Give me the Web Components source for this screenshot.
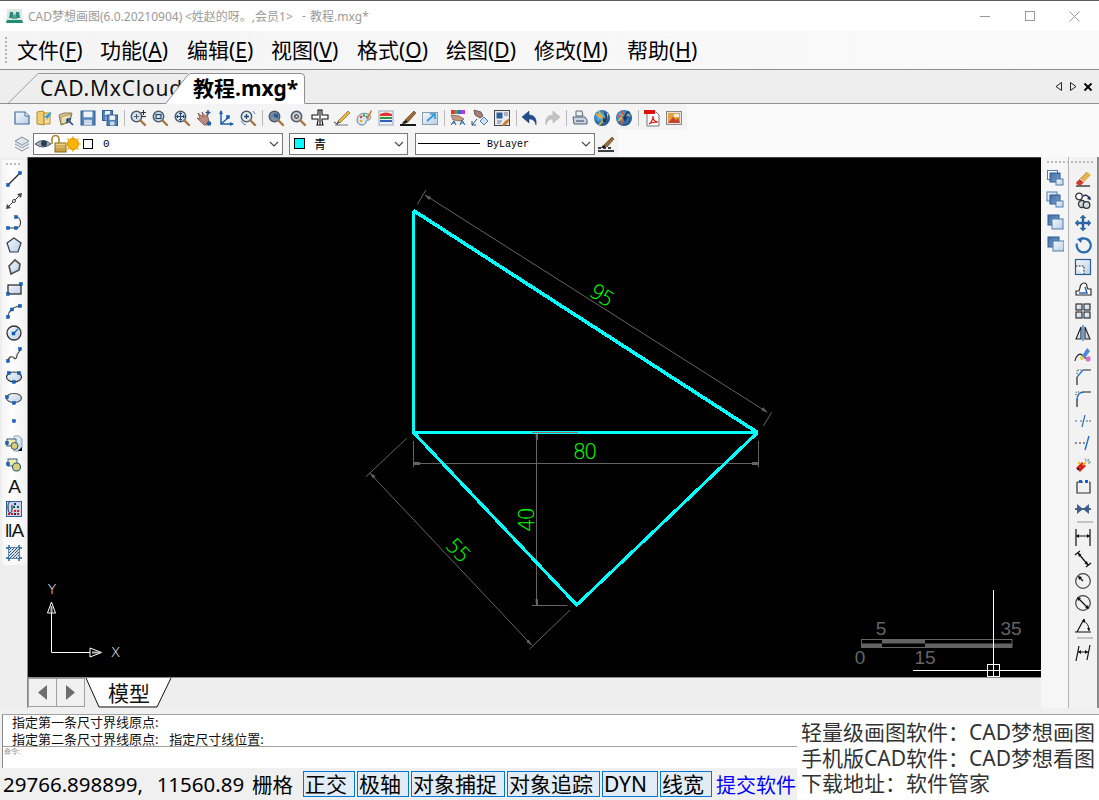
<!DOCTYPE html>
<html lang="zh">
<head>
<meta charset="utf-8">
<title>CAD梦想画图</title>
<style>
html, body { margin: 0; padding: 0; background: #f0f0f0; }
</style>
</head>
<body>
<cad-window>
    <cad-title></cad-title>
    <cad-menu>
        <cad-menu-item label="文件" key="F" width="83"></cad-menu-item>
        <cad-menu-item label="功能" key="A" width="87"></cad-menu-item>
        <cad-menu-item label="编辑" key="E" width="84"></cad-menu-item>
        <cad-menu-item label="视图" key="V" width="86"></cad-menu-item>
        <cad-menu-item label="格式" key="O" width="89"></cad-menu-item>
        <cad-menu-item label="绘图" key="D" width="88"></cad-menu-item>
        <cad-menu-item label="修改" key="M" width="93"></cad-menu-item>
        <cad-menu-item label="帮助" key="H" width="80"></cad-menu-item>
    </cad-menu>
    <cad-tabs></cad-tabs>
    <cad-toolbars></cad-toolbars>
    <cad-main></cad-main>
    <cad-command></cad-command>
    <cad-status></cad-status>
    <cad-promo></cad-promo>
</cad-window>

<script>
const CJK = '"Noto Sans", "Noto Sans CJK SC", sans-serif';

// small pieces the icons share
const N = (x, y) => `<rect x="${x - 1.5}" y="${y - 1.5}" width="3" height="3" fill="#0b66cc" stroke="#063f8c" stroke-width=".4"/>`;
const DEFS = `<defs>
    <linearGradient id="pale" x1="0" y1="0" x2="1" y2="1"><stop offset="0" stop-color="#f4f8fc"/><stop offset="1" stop-color="#b9cfe6"/></linearGradient>
    <linearGradient id="deep" x1="0" y1="0" x2="1" y2="1"><stop offset="0" stop-color="#3f6ea6"/><stop offset="1" stop-color="#7ea2ca"/></linearGradient>
    <linearGradient id="gold" x1="0" y1="0" x2="0" y2="1"><stop offset="0" stop-color="#f5dc8a"/><stop offset="1" stop-color="#c79a3c"/></linearGradient>
    <radialGradient id="ball" cx=".4" cy=".4" r=".7"><stop offset="0" stop-color="#8fd0ee"/><stop offset=".55" stop-color="#2f78b8"/><stop offset="1" stop-color="#20456f"/></radialGradient>
</defs>`;
const MAG = (inner, tint = '#d5e2ee') => `<circle cx="7.5" cy="7.5" r="5.2" fill="${tint}" stroke="#4d5c6c" stroke-width="1.5"/>
    <path d="M11.5 11.5l4.5 4.5" stroke="#a5763f" stroke-width="2.4" stroke-linecap="round"/>${inner}`;
const FLOPPY = (x, y, s) => `<rect x="${x}" y="${y}" width="${s}" height="${s}" fill="#4f81b5" stroke="#2f5f94"/>
    <rect x="${x + 2.5}" y="${y + .5}" width="${s - 5}" height="${s * .42}" fill="#eef3f8"/>
    <rect x="${x + 3}" y="${y + s * .62}" width="${s - 6}" height="${s * .38}" fill="#c8d8e8"/>`;
const STACK = (a) => `<rect x="${a[0]}" y="${a[1]}" width="11" height="10" fill="url(#deep)" stroke="#2d5c92"/>
    <rect x="${a[2]}" y="${a[3]}" width="11" height="10" fill="url(#pale)" stroke="#4f7cad"/>`;
const DIMBAR = (d) => `<path d="${d}" stroke="#111" stroke-width="1.2" fill="none"/>`;

const ICONS = {
    // top bar
    new: `<path d="M2 3h10l4 4v8H2z" fill="url(#pale)" stroke="#3f6c9e" stroke-width="1.2"/><path d="M12 3v4h4" fill="#fff" stroke="#3f6c9e"/>`,
    open: `<path d="M2 3l6-1 1 1v13l-7-1z" fill="#f0cf72" stroke="#b28a2f"/><path d="M9 4h6v11H9z" fill="#f6e19c" stroke="#b28a2f"/><path d="M16 3l-7 5 3 1-1 3 5-7z" fill="#2f9be0"/>`,
    open2: `<path d="M2 6l5-2h8l-2 9-9 3z" fill="#d8c58f" stroke="#8a7a49"/><path d="M4 8l10-3-2 8-8 2z" fill="#e9dcb0" stroke="#8a7a49" stroke-width=".6"/><path d="M10 10l6 6M10 10v4M10 10h4" stroke="#1f4f8c" stroke-width="1.6" fill="none"/>`,
    save: `<g transform="translate(1.5 1.5)">${FLOPPY(.5, .5, 14)}</g>`,
    saveall: FLOPPY(1.5, 1.5, 10) + FLOPPY(6, 6, 10.5),
    zoomin: MAG('<path d="M5 7.5h5M7.5 5v5" stroke="#456" />') + '<path d="M12 3.5h5M14.5 1v5" stroke="#234" stroke-width="1.1"/><path d="M12 7.5h5" stroke="#234" stroke-width="1.1"/>',
    zoomwin: MAG('<rect x="5" y="5.5" width="5" height="4" fill="none" stroke="#24476e" stroke-width="1.2"/>'),
    zoommove: MAG('<path d="M7.5 3.5v8M3.5 7.5h8M7.5 3.5l-1.5 1.5M7.5 3.5l1.5 1.5M7.5 11.5l-1.5-1.5M7.5 11.5l1.5-1.5M3.5 7.5l1.5-1.5M3.5 7.5l1.5 1.5M11.5 7.5l-1.5-1.5M11.5 7.5l-1.5 1.5" stroke="#24476e" fill="none"/>'),
    hand: `<path d="M3 4l5 4-1-5 4 5 1-3 2 7-2 4H9L2 9l3 1z" fill="#bd8a80" stroke="#7a5850" stroke-width=".8"/><path d="M13 1v5M10.5 3.5h5" stroke="#244f8a" stroke-width="1.4"/><circle cx="14" cy="14.5" r="2.3" fill="#1c5fa8"/>`,
    axes: `<path d="M4 2v13h12M4 15l8-7" stroke="#1f5fa5" stroke-width="1.5" fill="none"/><path d="M4 1l-2 4h4zM17 15l-4-2v4z" fill="#1f5fa5"/>${N(11, 8)}`,
    zoomball: MAG('<path d="M5 7.5h5M7.5 5v5" stroke="#24476e" stroke-width="1.3"/>', '#e4ecf3') + '<path d="M2 12a8 8 0 0 0 5 4M14 2l2 3" stroke="#4f80b5" fill="none"/>',
    zoomprev: MAG('<path d="M4 8l4-4 2 2 1-3v6l-5-1 2-1-1-1z" fill="#1f5594"/>', '#7c92a8'),
    zoomext: MAG('<circle cx="7.5" cy="7.5" r="3" fill="#555" stroke="#eee"/><circle cx="7.5" cy="7.5" r="1" fill="#eee"/>', '#b8c2cc'),
    pan: `<path d="M7 1h4v5h6v4h-6v2l1 4H6l1-4v-2H1V6h6z" fill="#fff" stroke="#111" stroke-width="1.1"/><path d="M9 1v15" stroke="#111" stroke-width="1.1"/>`,
    pencil: `<path d="M2 16h13" stroke="#777"/><path d="M5 12L15 2l2 2L7 14z" fill="#e6b64a" stroke="#8a6a1f" stroke-width=".7"/><path d="M5 12l-2 3 4-1z" fill="#555"/><path d="M1 13c2 1 3 3 4 2" stroke="#222" fill="none"/>`,
    palette: `<path d="M2 11c0-6 7-8 11-6 4 2 3 5 1 6-2 0-3 0-3 2 0 2-2 3-4 3-3 0-5-2-5-5z" fill="#dbe7f1" stroke="#5c7fa3"/><circle cx="6" cy="8" r="1.3" fill="#e33"/><circle cx="9" cy="6.5" r="1.3" fill="#3a3"/><circle cx="12" cy="8" r="1.3" fill="#36c"/><circle cx="6" cy="12" r="1.3" fill="#fa0"/><path d="M11 9l5-8 1 1-4 9z" fill="#c98a3a"/>`,
    layers: `<rect x="2" y="2" width="14" height="14" fill="#eef2f6" stroke="#9aa7b4"/><path d="M3 5q6-3 12 0M3 5h12v2H3z" fill="#d33"/><path d="M3 8h12v2H3z" fill="#2a9a3e"/><path d="M3 11h12v2H3z" fill="#2f62c0"/>`,
    brushline: `<path d="M1 16h16" stroke="#000" stroke-width="1.8"/><path d="M6 11L15 2l2 2-8 9z" fill="#9a6a34" stroke="#5b3d1a" stroke-width=".6"/><path d="M3 15c1-3 3-4 4-4l2 2c-1 1-3 2-6 2z" fill="#222"/>`,
    arrowbox: `<rect x="1.5" y="3.5" width="15" height="12" fill="url(#pale)" stroke="#8b9cae"/><path d="M6 12l8-7M9 5h5v5" stroke="#2b9be0" stroke-width="1.7" fill="none"/>`,
    colorhand: `<rect x="2" y="1" width="14" height="4" fill="#e33"/><rect x="6" y="1" width="3" height="4" fill="#3b3"/><rect x="9" y="1" width="3" height="4" fill="#36d"/><rect x="12" y="1" width="4" height="4" fill="#c3c"/><path d="M2 6l8 1 5 3-3 2-8-1z" fill="#c39a8a" stroke="#6d5548" stroke-width=".7"/><path d="M2 16l3-4 2 4M11 16l2-5 3 5M3 14h3M12 14h3" stroke="#2b5f92" fill="none"/>`,
    matchprop: `<path d="M3 1l7 2 2 4-3 2-5-3z" fill="#a87f78" stroke="#5b4640" stroke-width=".8"/><path d="M1 16l5-6M1 16v-4M1 16h4" stroke="#23527f" fill="none"/><path d="M9 12l4-4 4 4-4 4z" fill="#cfe1f1" stroke="#4f80b5"/>`,
    props: `<rect x="1.5" y="1.5" width="15" height="15" fill="#e9edf1" stroke="#444"/><rect x="3.5" y="3.5" width="6" height="6" fill="#2f5f9c"/><path d="M4 12h5M4 14h4M11 4h4M11 6h4" stroke="#778"/><path d="M9 16l3-4 5-3-2 5-4 3z" fill="#c5812e"/>`,
    undo: `<path d="M15 16c1-7-2-10-7-10V2L1 8l7 6v-4c3 0 6 1 7 6z" fill="#1f4f8c" stroke="#153a69" stroke-width=".5"/>`,
    redo: `<path d="M3 16c-1-7 2-10 7-10V2l7 6-7 6v-4c-3 0-6 1-7 6z" fill="#c1c4c7" stroke="#aaa" stroke-width=".5"/>`,
    plot: `<path d="M5 2h6l1 5H5z" fill="#eee" stroke="#5b6b7d"/><path d="M2 8h12l2 3v4H3z" fill="#c9d4e2" stroke="#4f607a"/><path d="M5 12h8" stroke="#345"/>`,
    globe1: `<circle cx="9" cy="9" r="8" fill="url(#ball)"/><path d="M3 5l9 5-6 6M6 2l2 6M15 4l-2 7" stroke="#f2b21c" stroke-width="1.5" fill="none"/><path d="M11 3a6 6 0 0 1 2 9l2 1h-5V8l2 2a4 4 0 0 0-1-5z" fill="#173c6f"/>`,
    globe2: `<circle cx="9" cy="9" r="8" fill="url(#ball)"/><path d="M2 6l7 3-3 7M6 2l4 6" stroke="#e3571c" stroke-width="1.6" fill="none"/><path d="M3 12l4-4M12 5l3 2" stroke="#f2c21c" stroke-width="1.3"/><path d="M14 2a7 7 0 0 0-5 6l-2-1 3 6 3-5-2-.5a5 5 0 0 1 4-4z" fill="#173c6f"/>`,
    pdf: `<path d="M4 3h9l3 3v11H4z" fill="#fff" stroke="#777"/><rect x="1" y="1" width="11" height="4" fill="#d11"/><path d="M6 15c3-2 4-6 4-8 0 4 2 6 5 6-3 0-6 0-9 2z" fill="none" stroke="#d11" stroke-width="1.1"/>`,
    image: `<rect x="1.5" y="2.5" width="15" height="13" fill="#e6e6e6" stroke="#888"/><rect x="3" y="4" width="12" height="10" fill="#e8a23a"/><path d="M3 14l5-6 3 3 2-2 2 5z" fill="#c4452b"/><path d="M9 5h5v3H9z" fill="#f5f0dc"/>`,

    // layer row
    stack: `<path d="M9 2l7 4-7 4-7-4z" fill="#dfe5ec" stroke="#7c8a99"/><path d="M2 9l7 4 7-4M2 12l7 4 7-4" stroke="#7c8a99" fill="none"/><path d="M9 10l7-4v3l-7 4-7-4V6z" fill="#c4ced8" opacity=".7"/>`,
    eye: `<path d="M1 9q8-7 16 0q-8 6-16 0z" fill="#9fb0bf" stroke="#4a5a69"/><circle cx="10" cy="8.5" r="3" fill="#2f3e4d"/>`,
    lock: `<rect x="6" y="8" width="11" height="9" fill="url(#gold)" stroke="#856416"/><path d="M3 9V4a3.5 3.5 0 0 1 7 0v4" fill="none" stroke="#a7832c" stroke-width="1.6"/><path d="M6 11h11M6 14h11" stroke="#a58530" stroke-width=".6"/>`,
    sun: `<circle cx="9" cy="9" r="5.5" fill="#ffb400" stroke="#e28a00"/><path d="M9 1v2M9 15v2M1 9h2M15 9h2M3.5 3.5l1.5 1.5M13 13l1.5 1.5M3.5 14.5L5 13M13 5l1.5-1.5" stroke="#f4b000" stroke-width="1.2"/>`,
    lweight: `<path d="M1 13h3M6 13h3M11 13h3M1 16h16" stroke="#000" stroke-width="1.5"/><path d="M7 10l8-8 2 2-7 8z" fill="#9a6a34" stroke="#5b3d1a" stroke-width=".6"/><path d="M4 13c1-2 2-3 3-3l2 2c-1 1-3 1-5 1z" fill="#222"/>`,

    // left bar
    line: `<path d="M3 15L15 3" stroke="#222" stroke-width="1.2"/>${N(3, 15)}${N(15, 3)}`,
    xline: `<path d="M2 16L16 2" stroke="#444"/><circle cx="9" cy="9" r="1.5" fill="#fff" stroke="#444"/><path d="M1 17l1-5 4 4zM17 1l-1 5-4-4z" fill="#444"/>`,
    pline: `<path d="M3 14h8M11 3c6 0 6 11 0 11" stroke="#333" stroke-width="1.1" fill="none"/>${N(3, 14)}${N(11, 14)}${N(11, 3)}`,
    polygon: `<path d="M9 2l7 5-3 9H5L2 7z" fill="url(#pale)" stroke="#2e3c4c" stroke-width="1.2"/>`,
    polygon2: `<path d="M10 2l5 4-1 6-8 4-2-8z" fill="url(#pale)" stroke="#555" stroke-width="1.7"/>`,
    rect: `<rect x="3" y="5" width="13" height="9" fill="url(#pale)" stroke="#222" stroke-width="1.2"/>${N(3, 14)}${N(16, 4)}`,
    arc: `<path d="M3 16C3 9 8 5 15 4" stroke="#555" stroke-width="1.2" fill="none"/>${N(3, 15)}${N(7, 7.5)}${N(15, 4)}`,
    circle: `<circle cx="9" cy="9" r="7" fill="url(#pale)" stroke="#333" stroke-width="1.3"/><path d="M9 9l4-4" stroke="#0b66cc" stroke-width="1.3"/>${N(8.5, 9.5)}`,
    spline: `<path d="M3 15c1-5 4-5 6-3s3-1 3-3 3-2 3-6" stroke="#444" stroke-width="1.2" fill="none"/>${N(3, 15)}${N(15, 3)}`,
    ellipse: `<ellipse cx="9" cy="9" rx="7.5" ry="5" fill="url(#pale)" stroke="#333" stroke-width="1.2"/>${N(4, 5)}${N(14, 5)}${N(9, 14)}`,
    ellarc: `<ellipse cx="9" cy="8" rx="7.5" ry="4.5" fill="url(#pale)" stroke="#555" stroke-width="1.2"/>${N(2, 7)}${N(9, 13)}`,
    point: N(9, 9),
    block: `<path d="M9 2h5l3 3v9l-3 3H9z" fill="url(#pale)" stroke="#8aa3bc"/><rect x="2" y="5" width="9" height="7" fill="#f1ecaa" stroke="#2f5f94"/><circle cx="9.5" cy="12" r="3.5" fill="#d9cd80" stroke="#2d5a75"/><path d="M13 17l4-4v4z" fill="#000"/>${N(2, 9)}`,
    block2: `<rect x="3" y="3" width="9" height="7" fill="#f1ecaa" stroke="#2f5f94"/><circle cx="11.5" cy="11" r="4" fill="#d9cd80" stroke="#2d5a75" stroke-width="1.1"/>${N(3, 8)}`,
    table: `<rect x="1.5" y="1.5" width="15" height="15" fill="#c9d6ee" stroke="#2f5f9c"/><path d="M5 2c-2 0-2 3-2 6s1 5 2 5 2-1 2-3V5" fill="none" stroke="#223" stroke-width="1"/><path d="M8 6h2v2H8zM12 6h2v2h-2z" fill="#164"/><path d="M9 10h2v2H9zM12 10h2v2h-2zM3 13h2v2H3zM6 13h2v2H6zM12 13h2v2h-2z" fill="#e11"/><path d="M9 3h2v2H9zM9 13h2v2H9z" fill="#135"/>`,
    hatch: `<path d="M4 1v16M14 1v16M1 4h16M1 14h16" stroke="#1f5f96" stroke-width="1.4"/><path d="M4 4h10v10H4z" fill="#d4dee8"/><path d="M4 6l2-2M4 9l5-5M4 12l8-8M5 14l9-9M8 14l6-6M11 14l3-3" stroke="#24476e" stroke-width=".9"/><path d="M4 4l10 10" stroke="#fff" stroke-width=".5"/>`,

    // right bar, first column
    order1: `<rect x="1.5" y="1.5" width="10" height="9" fill="#fff" stroke="#4f7cad"/><rect x="4" y="4" width="10" height="9" fill="url(#deep)" stroke="#2d5c92"/><rect x="10" y="10" width="7" height="6" fill="url(#pale)" stroke="#4f7cad"/>`,
    order2: `<rect x="1" y="1" width="10" height="9" fill="url(#pale)" stroke="#4f7cad"/><rect x="4" y="4" width="10" height="9" fill="url(#deep)" stroke="#2d5c92"/><rect x="10" y="10" width="7" height="6" fill="url(#pale)" stroke="#4f7cad"/>`,
    order3: STACK([2, 2, 6, 6]),
    order4: STACK([2, 2, 7, 6]),

    // right bar, second column
    erase: `<path d="M2 16h14" stroke="#222" stroke-width="1.3"/><path d="M2 13L13 2l4 3L7 15H4z" fill="#e5b347"/><path d="M2 13l4-4 4 3-3 3H4z" fill="#d33"/><path d="M6 9l4 3" stroke="#eee"/><path d="M2 13l11-11" stroke="#7a5a1a" stroke-width=".5"/>`,
    copy: `<circle cx="5" cy="4.5" r="3.3" fill="#fff" stroke="#333" stroke-width="1.3"/><circle cx="8" cy="12" r="3.5" fill="#cfdbe6" stroke="#333" stroke-width="1.3"/><circle cx="12.5" cy="13" r="3.3" fill="#cfdbe6" stroke="#333" stroke-width="1.3"/><path d="M9 4q4-2 6 2" stroke="#235" stroke-width="1.5" fill="none"/><path d="M17 8l-4-1 3-3z" fill="#235"/>`,
    move: `<path d="M9 1l3 3h-2v4h4V6l3 3-3 3v-2h-4v4h2l-3 3-3-3h2v-4H4v2L1 9l3-3v2h4V4H6z" fill="#2c6ab0" stroke="#1c4a80" stroke-width=".4"/>`,
    rotate: `<path d="M6 3.5a7 7 0 1 1-3 4" fill="none" stroke="#2c6ab0" stroke-width="2.2"/><path d="M9 1L3 3l4 4z" fill="#2c6ab0"/>`,
    scale: `<rect x="1.5" y="1.5" width="15" height="15" fill="url(#pale)" stroke="#2d5c92" stroke-width="1.2"/><path d="M2 9h7v7" fill="#fff"/><path d="M2 8h8v8" fill="none" stroke="#222" stroke-dasharray="1.5 1.5"/>`,
    offset: `<path d="M2 15v-4h3l1-3c0-3 2-5 4-5s3 2 3 4l1 2h3v6z" fill="#fff" stroke="#222" stroke-width="1.1"/><path d="M5 13h8l-2-6" stroke="#2c6ab0" stroke-width="1.5" fill="none"/>`,
    array: `<rect x="2" y="2" width="6" height="6" fill="url(#pale)" stroke="#222" stroke-width="1.1"/><rect x="10" y="2" width="6" height="6" fill="url(#pale)" stroke="#222" stroke-width="1.1"/><rect x="2" y="10" width="6" height="6" fill="url(#pale)" stroke="#222" stroke-width="1.1"/><rect x="10" y="10" width="6" height="6" fill="url(#pale)" stroke="#222" stroke-width="1.1"/>`,
    mirror: `<path d="M7 3L2 15h5zM11 3l5 12h-5z" fill="url(#pale)" stroke="#222" stroke-width="1.1"/><path d="M9 1v16" stroke="#1f6fd0" stroke-width="1.3"/>`,
    stretchy: `<path d="M1 15c1-6 5-8 7-6s3 5 8 2" fill="none" stroke="#222" stroke-width="1.2"/><path d="M13 2l3 3-5 7-3-2z" fill="#4b88d8"/><circle cx="8" cy="12" r="2" fill="#e5cb47"/><circle cx="14" cy="13" r="2.5" fill="#d86bd0"/>`,
    chamfer: `<path d="M3 17V9M9 2h8" stroke="#222" stroke-width="1.2"/><path d="M3 9l6-7" stroke="#1f6fd0" stroke-width="1.2"/><path d="M3 6V2h5" stroke="#222" stroke-dasharray="1 1.5" fill="none"/>`,
    fillet: `<path d="M3 17V9M9 2h8" stroke="#222" stroke-width="1.2"/><path d="M3 10C3 5 6 2 10 2" stroke="#1f6fd0" stroke-width="1.6" fill="none"/><path d="M2 5V2h4" stroke="#222" stroke-dasharray="1 1.5" fill="none"/>`,
    trim: `<path d="M1 9h3M6 9h2M12 9h2M15 9h2" stroke="#2c6ab0" stroke-dasharray="2 1.5"/><path d="M11 3l-3 12" stroke="#2c6ab0" stroke-width="1.2"/>`,
    extend: `<path d="M1 9h2M5 9h2M9 9h2" stroke="#222" stroke-width="1.1"/><path d="M15 2l-4 14" stroke="#1f6fd0" stroke-width="1.4"/>`,
    explode: `<path d="M2 12l6-6 4 4-6 6z" fill="#d8251c"/><path d="M9 9l3-3" stroke="#f0c41c" stroke-width="2"/><path d="M11 2l1 3 3-2-1 3h3l-3 2" fill="none" stroke="#8aa" stroke-width="1"/><circle cx="5" cy="7" r="1.3" fill="#f0c41c"/><circle cx="4" cy="13" r="1" fill="#111"/>`,
    stretch: `<path d="M3 4v11h13V4" fill="none" stroke="#333" stroke-width="1.2"/><path d="M3 4h13" stroke="#333" stroke-dasharray="2 2"/><rect x="5" y="2" width="3" height="3" fill="#0b66cc"/><rect x="11" y="2" width="3" height="3" fill="#0b66cc"/>`,
    join: `<path d="M1 9h16" stroke="#111" stroke-width="1.3"/><path d="M3 4l6 5-6 5zM15 4L9 9l6 5z" fill="#3a5f8c"/>`,
    dimlin: DIMBAR('M2 1v17M16 1v17M2 8h14') + '<path d="M2 8l3-2v4zM16 8l-3-2v4z" fill="#111"/>',
    dimali: DIMBAR('M1 5l5-4M12 17l5-4M4 3l10 12') + '<path d="M4 3l3.5 1.5L5 7zM14 15l-3.5-1.5L13 11z" fill="#111"/>',
    dimrad: `<circle cx="9" cy="9" r="7.3" fill="none" stroke="#444" stroke-width="1.2"/><path d="M9 9L5 5" stroke="#111" stroke-width="1.2"/><path d="M4 4l4 1-3 3z" fill="#111"/>`,
    dimdia: `<circle cx="9" cy="9" r="7.3" fill="none" stroke="#444" stroke-width="1.2"/><path d="M4 4l10 10" stroke="#111" stroke-width="1.3"/><path d="M3 3l4 1-3 3zM15 15l-4-1 3-3z" fill="#111"/>`,
    dimang: DIMBAR('M1 16h16M3 16L10 3') + '<path d="M9 5c4 1 6 5 6 10" fill="none" stroke="#111"/><path d="M15 15l-2-3h3zM8 5l3-2v4z" fill="#111"/>',
    dimob: DIMBAR('M5 2L2 17M16 1l-3 15M4 8h10') + '<path d="M4 8l3-2v4zM14 8l-3-2v4z" fill="#111"/>'
};

class ToolIcon extends HTMLElement {
    constructor() {
        super();
        this.shadow = this.attachShadow({mode: 'open'});
        this.render();
    }

    render() {
        const size = this.getAttribute('size') || 22;
        const name = this.getAttribute('name');
        const letter = this.getAttribute('letter');
        const body = letter
            ? `<span>${letter}</span>`
            : `<svg width="18" height="18" viewBox="0 0 18 18">${DEFS}${ICONS[name] || ''}</svg>`;
        this.shadow.innerHTML = `
        <style>
            :host {
                display: flex;
                flex: none;
                width: ${size}px;
                height: ${size}px;
                align-items: center;
                justify-content: center;
            }
            svg { flex: none; }
            span {
                font: 19px "Liberation Sans", sans-serif;
                color: #111;
                letter-spacing: -1px;
            }
        </style>
        ${body}`;
    }
}

class ToolSep extends HTMLElement {
    constructor() {
        super();
        this.shadow = this.attachShadow({mode: 'open'});
        this.shadow.innerHTML = `
        <style>
            :host { display: block; flex: none; }
            :host([dir=v]) { width: 6px; height: 16px; background: linear-gradient(#b9b9b9, #b9b9b9) center / 1px 100% no-repeat; align-self: center; }
            :host([dir=h]) { width: 16px; height: 2px; margin: 1px auto 3px; background: #c4c4c4; }
        </style>`;
    }
}

class CadWindow extends HTMLElement {
    constructor() {
        super();
        this.shadow = this.attachShadow({mode: 'open'});
        this.shadow.innerHTML = `
        <style>
            :host {
                display: flex;
                flex-direction: column;
                position: relative;
                width: 1099px;
                height: 800px;
                overflow: hidden;
                background: #f0f0f0;
                font-family: ${CJK};
            }
        </style>
        <slot></slot>`;
    }
}

class CadTitle extends HTMLElement {
    constructor() {
        super();
        this.shadow = this.attachShadow({mode: 'open'});
        this.shadow.innerHTML = `
        <style>
            :host {
                display: flex;
                align-items: center;
                flex: none;
                height: 30px;
                background: #fff;
                border-top: 1px solid #5f5b57;
                color: #9a9a9a;
                font-size: 12px;
                white-space: nowrap;
            }
            .logo { margin: 0 5px 0 6px; flex: none; }
            .name { flex: 1; display: flex; }
            .name span { flex: none; }
            .ctl { flex: none; width: 45px; height: 30px; display: flex; align-items: center; justify-content: center; }
            .ctl.last { margin-right: 2px; }
        </style>
        <svg class="logo" width="17" height="17" viewBox="0 0 17 17">
            <path d="M2 1h13q1 0 1 1l1 13H0L1 2q0-1 1-1z" fill="#dfe7e3"/>
            <path d="M3 10l1-6h3l1 6zM9 10l1-6h3l1 6z" fill="#2a8a7c"/>
            <path d="M5.5 11l3-5 3 5z" fill="#54a596"/>
            <path d="M1 12h15l1 3H0z" fill="#1f8f6f"/>
        </svg>
        <div class="name">
            <span style="width:157px">CAD梦想画图(6.0.20210904)</span>
            <span style="width:117px">&lt;姓赵的呀。,会员1&gt;</span>
            <span style="width:8px">-</span>
            <span>教程.mxg*</span>
        </div>
        <span class="ctl"><svg width="10" height="10"><path d="M0 5.5h10" stroke="#999"/></svg></span>
        <span class="ctl"><svg width="10" height="10"><rect x=".5" y=".5" width="9" height="9" fill="none" stroke="#999"/></svg></span>
        <span class="ctl last"><svg width="11" height="11"><path d="M.5.5l10 10M10.5.5l-10 10" stroke="#999"/></svg></span>`;
    }
}

class CadMenu extends HTMLElement {
    constructor() {
        super();
        this.shadow = this.attachShadow({mode: 'open'});
        this.shadow.innerHTML = `
        <style>
            :host {
                display: flex;
                align-items: center;
                flex: none;
                height: 39px;
                padding-left: 5px;
                box-sizing: border-box;
                background: linear-gradient(90deg, #f4f4f4, #fafafa);
                border-bottom: 1px solid #8f8f8f;
            }
            .grip { width: 2px; height: 27px; margin-right: 10px; background: repeating-linear-gradient(#b4b4b4 0 2px, transparent 2px 4px); }
        </style>
        <div class="grip"></div>
        <slot></slot>`;
    }
}

class CadMenuItem extends HTMLElement {
    constructor() {
        super();
        this.shadow = this.attachShadow({mode: 'open'});
        const label = this.getAttribute('label');
        const key = this.getAttribute('key');
        const width = this.getAttribute('width');
        this.shadow.innerHTML = `
        <style>
            :host {
                display: block;
                flex: none;
                width: ${width}px;
                font-size: 21px;
                line-height: 26px;
                color: #000;
                white-space: nowrap;
            }
            u { text-underline-offset: 2px; }
        </style>
        ${label}(<u>${key}</u>)`;
    }
}

class CadTab extends HTMLElement {
    constructor() {
        super();
        this.shadow = this.attachShadow({mode: 'open'});
        this.shadow.innerHTML = `
        <style>
            :host {
                display: block;
                position: relative;
                flex: none;
                white-space: nowrap;
                font-size: 21px;
                line-height: 30px;
                color: #111;
            }
            :host([active]) { font-weight: 700; color: #000; }
        </style>
        <slot></slot>`;
    }
}

class CadTabs extends HTMLElement {
    constructor() {
        super();
        this.shadow = this.attachShadow({mode: 'open'});
        this.shadow.innerHTML = `
        <style>
            :host {
                display: flex;
                align-items: flex-end;
                flex: none;
                height: 34px;
                box-sizing: border-box;
                background: #eeeeee;
                border-bottom: 1px solid #8f8f96;
                padding-left: 8px;
            }
            svg { display: block; }
            .shape { position: absolute; left: 0; top: 0; }
            .first { width: 177px; height: 30px; }
            .first span { position: absolute; left: 32px; top: 0; width: 155px; overflow: hidden; letter-spacing: .8px; }
            .active { width: 140px; height: 31px; margin-left: -20px; margin-bottom: -1px; }
            .active span { position: absolute; left: 28px; top: 0; }
            .nav { margin-left: auto; display: flex; gap: 6px; align-self: center; padding-right: 6px; }
        </style>
        <cad-tab class="first">
            <svg class="shape" width="180" height="30"><path d="M.5 30L30 .5H180" fill="none" stroke="#999"/></svg>
            <span>CAD.MxCloud</span>
        </cad-tab>
        <cad-tab class="active" active>
            <svg class="shape" width="140" height="31"><path d="M.5 31L22 3Q24 .5 26 .5H136Q139.5 .5 139.5 4V31z" fill="#fff"/><path d="M.5 31L22 3Q24 .5 26 .5H136Q139.5 .5 139.5 4V30" fill="none" stroke="#8f8f96"/></svg>
            <span>教程.mxg*</span>
        </cad-tab>
        <div class="nav">
            <svg width="8" height="10"><path d="M6.5 .5v8L1 4.5z" fill="none" stroke="#222"/></svg>
            <svg width="8" height="10"><path d="M1.5 .5v8L7 4.5z" fill="none" stroke="#222"/></svg>
            <svg width="10" height="10"><path d="M1.5 1.5l7 7M8.5 1.5l-7 7" stroke="#000" stroke-width="1.8"/></svg>
        </div>`;
    }
}

class CadCombo extends HTMLElement {
    constructor() {
        super();
        this.shadow = this.attachShadow({mode: 'open'});
        this.shadow.innerHTML = `
        <style>
            :host {
                display: flex;
                align-items: center;
                flex: none;
                height: 22px;
                box-sizing: border-box;
                background: #fff;
                border: 1px solid #7a7a7a;
                font-size: 12px;
                color: #000;
                white-space: nowrap;
            }
            .body { flex: 1; display: flex; align-items: center; min-width: 0; }
            .arrow { flex: none; margin-right: 3px; }
        </style>
        <div class="body"><slot></slot></div>
        <svg class="arrow" width="10" height="6" viewBox="0 0 10 6"><path d="M1 1l4 4 4-4" fill="none" stroke="#444" stroke-width="1.1"/></svg>`;
    }
}

class CadToolbars extends HTMLElement {
    constructor() {
        super();
        this.shadow = this.attachShadow({mode: 'open'});
        const row = (groups) => groups
            .map(g => g.map(n => `<tool-icon name="${n}"></tool-icon>`).join(''))
            .join('<tool-sep dir="v"></tool-sep>');
        this.shadow.innerHTML = `
        <style>
            :host {
                display: flex;
                flex-direction: column;
                flex: none;
                height: 53px;
                background: #fafafa;
            }
            .row1, .row2 {
                display: flex;
                align-items: center;
                box-sizing: border-box;
                padding-left: 11px;
                background: #f4f4f4;
                border-radius: 0 4px 4px 0;
            }
            .row1 { height: 26px; width: 687px; padding-top: 2px; }
            .row2 { height: 27px; width: 618px; }
            .layer { width: 250px; }
            .layer tool-icon:first-child { margin-left: 1px; }
            .swatch { width: 10px; height: 10px; box-sizing: border-box; border: 1px solid #000; background: #fff; flex: none; margin-left: 3px; }
            .zero { margin-left: 10px; font: 11px "Liberation Mono", monospace; }
            .color { width: 119px; margin-left: 6px; }
            .cyan { width: 11px; height: 11px; box-sizing: border-box; border: 1px solid #000; background: #00ffff; flex: none; margin: 0 9px 0 4px; }
            .ltype { width: 180px; margin-left: 7px; }
            .rule { width: 62px; height: 1px; background: #000; margin: 0 7px 0 2px; flex: none; }
            .ltype span { font: 10px "Liberation Mono", monospace; margin-top: 2px; }
        </style>
        <div class="row1">
            ${row([
                ['new', 'open', 'open2', 'save', 'saveall'],
                ['zoomin', 'zoomwin', 'zoommove', 'hand', 'axes', 'zoomball'],
                ['zoomprev', 'zoomext', 'pan', 'pencil', 'palette', 'layers', 'brushline', 'arrowbox'],
                ['colorhand', 'matchprop', 'props'],
                ['undo', 'redo'],
                ['plot', 'globe1', 'globe2'],
                ['pdf', 'image']
            ])}
        </div>
        <div class="row2">
            <tool-icon name="stack"></tool-icon>
            <cad-combo class="layer">
                <tool-icon size="15" name="eye"></tool-icon>
                <tool-icon size="15" name="lock"></tool-icon>
                <tool-icon size="15" name="sun"></tool-icon>
                <div class="swatch"></div>
                <span class="zero">0</span>
            </cad-combo>
            <cad-combo class="color">
                <div class="cyan"></div>
                <span>青</span>
            </cad-combo>
            <cad-combo class="ltype">
                <div class="rule"></div>
                <span>ByLayer</span>
            </cad-combo>
            <tool-icon name="lweight"></tool-icon>
        </div>`;
    }
}

class CadLeftBar extends HTMLElement {
    constructor() {
        super();
        this.shadow = this.attachShadow({mode: 'open'});
        const names = ['line', 'xline', 'pline', 'polygon', 'polygon2', 'rect', 'arc', 'circle', 'spline', 'ellipse', 'ellarc', 'point', 'block', 'block2'];
        this.shadow.innerHTML = `
        <style>
            :host {
                display: block;
                background: #eeeeee;
                border-right: 1px solid #8a8a8a;
            }
            .bar {
                display: flex;
                flex-direction: column;
                align-items: center;
                width: 25px;
                margin: 3px 0 0 2px;
                padding: 8px 1px 1px 0;
                box-sizing: border-box;
                border-radius: 0 0 3px 3px;
                background: linear-gradient(90deg, #f6f6f6, #fdfdfd 40%, #f2f2f2);
                position: relative;
            }
            .grip { position: absolute; top: 3px; left: 4px; width: 16px; height: 2px; background: repeating-linear-gradient(90deg, #bbb 0 2px, transparent 2px 4px); }
        </style>
        <div class="bar">
            <div class="grip"></div>
            ${names.map(n => `<tool-icon name="${n}"></tool-icon>`).join('')}
            <tool-icon letter="A"></tool-icon>
            <tool-icon name="table"></tool-icon>
            <tool-icon letter="&#8214;A"></tool-icon>
            <tool-icon name="hatch"></tool-icon>
        </div>`;
    }
}

class CadRightBar extends HTMLElement {
    constructor() {
        super();
        this.shadow = this.attachShadow({mode: 'open'});
        const icons = (list) => list.map(n => `<tool-icon name="${n}"></tool-icon>`).join('');
        this.shadow.innerHTML = `
        <style>
            :host {
                display: flex;
                background: #f6f6f6;
                border-right: 2px solid #8a8a8a;
                box-sizing: border-box;
            }
            .a { width: 28px; padding: 10px 0 0 3px; box-sizing: border-box; border-right: 1px solid #b4b4b4; position: relative; }
            .b { flex: 1; padding: 11px 0 0 3px; box-sizing: border-box; background: #f2f2f2; display: flex; flex-direction: column; }
            .grip { position: absolute; top: 4px; left: 6px; width: 48px; height: 2px; background: repeating-linear-gradient(90deg, #bbb 0 2px, transparent 2px 4px); }
        </style>
        <div class="a">
            <div class="grip"></div>
            ${icons(['order1', 'order2', 'order3', 'order4'])}
        </div>
        <div class="b">
            ${icons(['erase', 'copy', 'move', 'rotate', 'scale', 'offset', 'array', 'mirror', 'stretchy', 'chamfer', 'fillet', 'trim', 'extend', 'explode', 'stretch', 'join'])}
            <tool-sep dir="h"></tool-sep>
            ${icons(['dimlin', 'dimali', 'dimrad', 'dimdia', 'dimang'])}
            <tool-sep dir="h"></tool-sep>
            ${icons(['dimob'])}
        </div>`;
    }
}

class CadCanvas extends HTMLElement {
    constructor() {
        super();
        this.shadow = this.attachShadow({mode: 'open'});
        this.shadow.innerHTML = `
        <style>
            :host { display: block; background: #000; overflow: hidden; border-top: 1px solid #444; border-bottom: 1px solid #8a8a8a; box-sizing: border-box; }
            svg { display: block; margin-top: -1px; }
            .dim { stroke: #646464; fill: none; stroke-width: 1; }
            .arrow { fill: #646464; }
            .num { font: 200 21px "DejaVu Sans", sans-serif; fill: #00ff00; stroke: #00ff00; stroke-width: .1; letter-spacing: -2px; text-anchor: middle; dominant-baseline: central; }
            .scale { font: 19px "Liberation Sans", sans-serif; fill: #646464; text-anchor: middle; }
            .axis { font: 200 14px "DejaVu Sans", sans-serif; fill: #fff; text-anchor: middle; }
        </style>
        <svg width="1013" height="521" viewBox="28 157 1013 521">
            <!-- dimensions -->
            <path class="dim" d="M417.3 204.3L426 190M425 195L767.3 412.3M763.3 426L771.7 412.3"/>
            <path class="arrow" d="M425 195l6 2-2 3zM767.3 412.3l-6-2 2-3z"/>
            <path class="dim" d="M413.5 441v26M758.5 441v26M413.5 463.5H758.5M532 605.5H567.5M536.5 434V605.5"/>
            <path class="arrow" d="M414 462h6v3h-6zM752 462h6v3h-6zM535.5 434h2.5v6h-2zM535.5 599h2.5v6h-2z"/>
            <path class="dim" d="M406.7 438.3L366 476.7M370 473.3L531.7 645M570 610L529.3 649.3"/>
            <path class="arrow" d="M370 473l5.5 3-2.5 2.5zM531.7 645l-5.5-3 2.5-2.5z"/>
            <!-- triangle -->
            <g fill="none" stroke="#00ffff" shape-rendering="crispEdges">
                <path stroke-width="3" d="M413.5 432.5V210.5M413.5 432.5H757.5"/>
                <path stroke-width="3.6" d="M413.5 210.5L757.5 432.5"/>
                <path stroke-width="3.2" d="M413.5 432.5L576.7 605L757.5 432.5"/>
            </g>
            <path d="M532 432.5H578" stroke="#8a6a6a" stroke-width="1"/>
            <text class="num" transform="translate(601 295) rotate(32.5)">95</text>
            <text class="num" x="584" y="452">80</text>
            <text class="num" transform="translate(527 520.5) rotate(-90)">40</text>
            <text class="num" transform="translate(457.5 550) rotate(46.5)">55</text>
            <!-- ucs -->
            <path d="M51.5 613V652.5H90M51.5 602L47.5 613H55.5ZM101.5 652.5L90 648V657Z" fill="none" stroke="#fff" stroke-width="1"/>
            <path d="M51.5 606V613M92 652.5H100" stroke="#bbb" stroke-width="2"/>
            <text class="axis" x="52" y="594">Y</text>
            <text class="axis" x="115.5" y="657">X</text>
            <!-- scale bar -->
            <rect x="861.5" y="639.5" width="150.5" height="8" fill="none" stroke="#646464"/>
            <path d="M861.5 643.5H882V647.5H861.5ZM882 639.5H925V643.5H882ZM925 643.5H1012V647.5H925Z" fill="#646464"/>
            <text class="scale" x="881" y="635">5</text>
            <text class="scale" x="1011" y="635">35</text>
            <text class="scale" x="860" y="664">0</text>
            <text class="scale" x="925" y="664">15</text>
            <!-- crosshair -->
            <path d="M993.5 590V678M913 670.5H1041M987.5 664.5h12v12h-12z" fill="none" stroke="#fff" shape-rendering="crispEdges"/>
        </svg>`;
    }
}

class CadModelBar extends HTMLElement {
    constructor() {
        super();
        this.shadow = this.attachShadow({mode: 'open'});
        this.shadow.innerHTML = `
        <style>
            :host { display: flex; align-items: flex-start; background: #eeeeee; }
            button {
                display: flex;
                align-items: center;
                justify-content: center;
                flex: none;
                width: 29px;
                height: 29px;
                padding: 0;
                margin: 0 -1px 0 0;
                background: #f0f0f0;
                border: 1px solid #a0a0a0;
            }
            .tab { position: relative; width: 90px; height: 30px; margin-left: 1px; flex: none; }
            .tab svg { position: absolute; left: 0; top: 0; }
            .tab span { position: absolute; left: 23px; top: 0; font-size: 21px; line-height: 30px; color: #111; }
        </style>
        <button><svg width="9" height="15"><path d="M9 0v15L0 7.5z" fill="#6d6d6d"/></svg></button>
        <button><svg width="9" height="15"><path d="M0 0v15L9 7.5z" fill="#6d6d6d"/></svg></button>
        <div class="tab">
            <svg width="90" height="30"><path d="M1 0L14 28.5H72L86 0z" fill="#fff"/><path d="M1 0L14 29H72L86 0" fill="none" stroke="#111"/></svg>
            <span>模型</span>
        </div>`;
    }
}

class CadMain extends HTMLElement {
    constructor() {
        super();
        this.shadow = this.attachShadow({mode: 'open'});
        this.shadow.innerHTML = `
        <style>
            :host {
                display: grid;
                flex: none;
                grid-template-columns: 28px 1013px 58px;
                grid-template-rows: 521px 30px;
                height: 551px;
            }
            cad-left-bar { grid-column: 1; grid-row: 1 / 3; }
            cad-canvas { grid-column: 2; grid-row: 1; }
            cad-model-bar { grid-column: 2; grid-row: 2; }
            cad-right-bar { grid-column: 3; grid-row: 1 / 3; }
        </style>
        <cad-left-bar></cad-left-bar>
        <cad-canvas></cad-canvas>
        <cad-model-bar></cad-model-bar>
        <cad-right-bar></cad-right-bar>`;
    }
}

class CadCommand extends HTMLElement {
    constructor() {
        super();
        this.shadow = this.attachShadow({mode: 'open'});
        this.shadow.innerHTML = `
        <style>
            :host {
                display: block;
                flex: none;
                height: 54px;
                margin-top: 6px;
                margin-left: 2px;
                box-sizing: border-box;
                background: #fff;
                border-top: 1px solid #a0a0a0;
                border-left: 1px solid #8a8a8a;
                color: #111;
                font-size: 13px;
            }
            .log { height: 33px; margin-top: -1px; box-sizing: border-box; padding-left: 9px; line-height: 16.5px; border-bottom: 1px solid #a0a0a0; white-space: pre; word-spacing: 2px; }
            .prompt { padding-left: 1px; font-size: 7px; line-height: 9px; color: #8c8c8c; }
        </style>
        <div class="log">指定第一条尺寸界线原点:
指定第二条尺寸界线原点:  指定尺寸线位置:</div>
        <div class="prompt">命令:</div>`;
    }
}

class CadStatus extends HTMLElement {
    constructor() {
        super();
        this.shadow = this.attachShadow({mode: 'open'});
        const buttons = [['正交', 52], ['极轴', 52], ['对象捕捉', 94], ['对象追踪', 93], ['DYN', 56], ['线宽', 52]];
        this.shadow.innerHTML = `
        <style>
            :host {
                display: flex;
                align-items: center;
                flex: none;
                height: 32px;
                padding-left: 3px;
                box-sizing: border-box;
                background: #f0f0f0;
                font-size: 20.5px;
                color: #000;
                white-space: pre;
            }
            .coord { width: 249px; flex: none; word-spacing: 1.5px; }
            .grid { width: 51px; flex: none; }
            .btn {
                flex: none;
                height: 26px;
                line-height: 24px;
                font-size: 21px;
                box-sizing: border-box;
                margin-right: 2px;
                padding-left: 1px;
                background: #e1ecf5;
                border: 1px solid #0078d7;
            }
            .link { margin-left: 2px; color: #0000ff; font-size: 20px; }
        </style>
        <span class="coord">29766.898899,  11560.89</span>
        <span class="grid">栅格</span>
        ${buttons.map(b => `<span class="btn" style="width:${b[1]}px">${b[0]}</span>`).join('')}
        <span class="link">提交软件</span>`;
    }
}

class CadPromo extends HTMLElement {
    constructor() {
        super();
        this.shadow = this.attachShadow({mode: 'open'});
        this.shadow.innerHTML = `
        <style>
            :host {
                display: block;
                position: absolute;
                right: 0;
                bottom: 0;
                width: 302px;
                height: 81px;
                padding: 1px 0 0 4px;
                box-sizing: border-box;
                background: #fff;
                color: #333;
                font-size: 21px;
                line-height: 25.5px;
                white-space: nowrap;
            }
            div { height: 25.5px; }
        </style>
        <div>轻量级画图软件：CAD梦想画图</div>
        <div>手机版CAD软件：CAD梦想看图</div>
        <div>下载地址：软件管家</div>`;
    }
}

customElements.define('tool-icon', ToolIcon);
customElements.define('tool-sep', ToolSep);
customElements.define('cad-window', CadWindow);
customElements.define('cad-title', CadTitle);
customElements.define('cad-menu', CadMenu);
customElements.define('cad-menu-item', CadMenuItem);
customElements.define('cad-tab', CadTab);
customElements.define('cad-tabs', CadTabs);
customElements.define('cad-combo', CadCombo);
customElements.define('cad-toolbars', CadToolbars);
customElements.define('cad-left-bar', CadLeftBar);
customElements.define('cad-right-bar', CadRightBar);
customElements.define('cad-canvas', CadCanvas);
customElements.define('cad-model-bar', CadModelBar);
customElements.define('cad-main', CadMain);
customElements.define('cad-command', CadCommand);
customElements.define('cad-status', CadStatus);
customElements.define('cad-promo', CadPromo);
</script>
</body>
</html>
